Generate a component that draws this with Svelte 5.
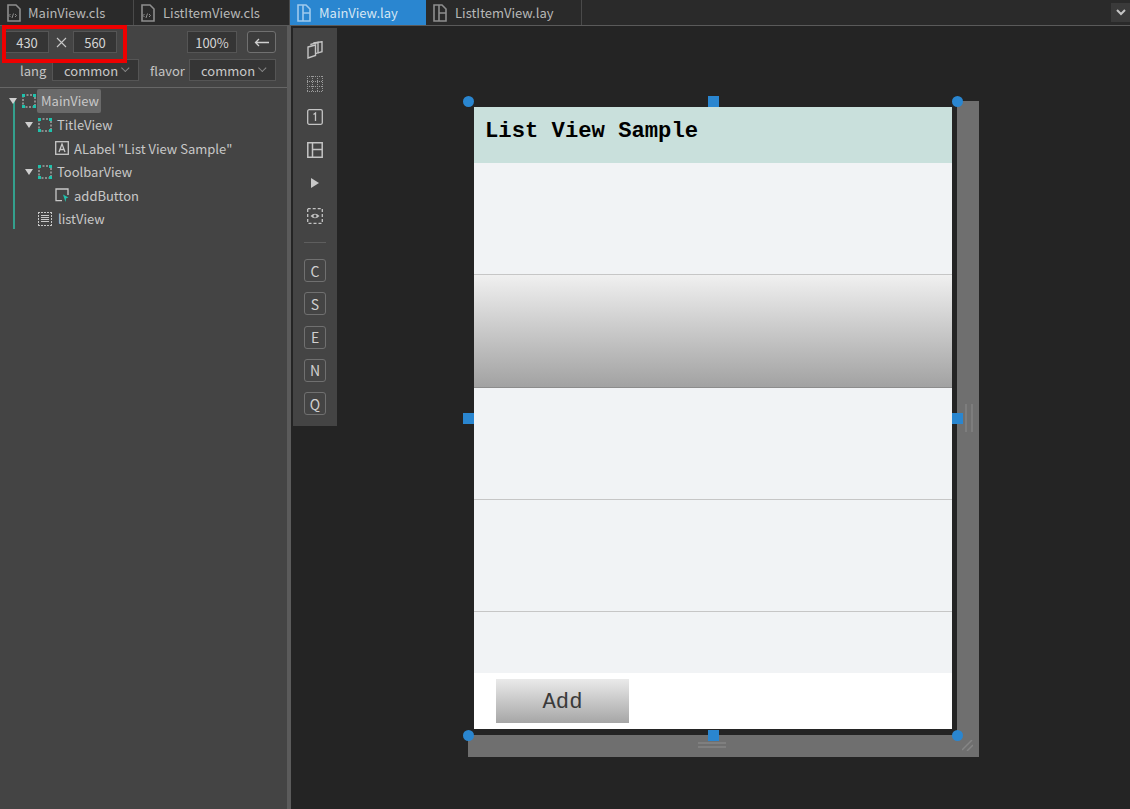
<script>
  const tabs = [
    { name: 'MainView.cls', kind: 'cls', width: 134 },
    { name: 'ListItemView.cls', kind: 'cls', width: 156 },
    { name: 'MainView.lay', kind: 'lay', width: 136, active: true },
    { name: 'ListItemView.lay', kind: 'lay', width: 156 }
  ];

  const tree = [
    { label: 'TitleView', depth: 1, icon: 'view', open: true },
    { label: 'ALabel "List View Sample"', depth: 2, icon: 'label' },
    { label: 'ToolbarView', depth: 1, icon: 'view', open: true },
    { label: 'addButton', depth: 2, icon: 'button' },
    { label: 'listView', depth: 1, icon: 'list' }
  ];

  const letters = ['C', 'S', 'E', 'N', 'Q'];
  const rows = [false, true, false, false, false];
  const handles = ['tl', 'tc', 'tr', 'ml', 'mr', 'bl', 'bc', 'br'];
</script>

<div class="app">
  <header class="tabbar">
    {#each tabs as tab}
      <div class="tab" class:active={tab.active} style="width: {tab.width}px">
        <svg class="file-icon" width="16" height="18" viewBox="0 0 16 18" fill="none" stroke="currentColor" stroke-width="1.6">
          {#if tab.kind === 'cls'}
            <path d="M2 1h8l4 4v12H2z" />
            <path d="M4.500 13l-1.500-1.500 1.500-1.500M7.500 9.500l-1.500 4.500M9 10l1.500 1.500-1.500 1.500" stroke-width="1" />
          {:else}
            <path d="M2 1h8l4 4v12H2z" />
            <path d="M7 1v16M7 9h7" />
          {/if}
        </svg>
        <span>{tab.name}</span>
      </div>
    {/each}
    <div class="tab-menu">
      <svg width="10" height="7" viewBox="0 0 10 7" fill="none" stroke="#c4c4c4" stroke-width="2">
        <path d="M1 1l4 4 4-4" />
      </svg>
    </div>
  </header>

  <div class="body">
    <aside class="side">
      <div class="controls">
        <div class="size-row">
          <div class="size-group">
            <div class="field num">430</div>
            <svg class="times" width="11" height="11" viewBox="0 0 11 11" stroke="#c8c8c8" stroke-width="1.100">
              <path d="M1 1l9 9M10 1l-9 9" />
            </svg>
            <div class="field num">560</div>
          </div>
          <div class="field zoom">100%</div>
          <div class="back">
            <svg width="15" height="9" viewBox="0 0 15 9" fill="none" stroke="#d0d0d0" stroke-width="1.300">
              <path d="M15 4.500H1.500M5 1L1.500 4.500 5 8" />
            </svg>
          </div>
        </div>
        <div class="select-row">
          <span class="select-label lang">lang</span>
          <div class="select">common <i class="caret"></i></div>
          <span class="select-label flavor">flavor</span>
          <div class="select">common <i class="caret"></i></div>
        </div>
      </div>

      <div class="tree">
        <span class="guide"></span>
        <div class="node">
          <i class="arrow"></i>
          <svg class="node-icon" width="14" height="14" viewBox="0 0 14 14">
            <rect x="1" y="1" width="12" height="12" fill="none" stroke="#d0d0d0" stroke-dasharray="2 1.500" />
            <path d="M0 0h3v3H0zM11 0h3v3h-3zM0 11h3v3H0zM11 11h3v3h-3z" fill="#1fc2ac" />
          </svg>
          <span class="node-label root">MainView</span>
        </div>
        {#each tree as node}
          <div class="node" class:d1={node.depth === 1} class:d2={node.depth === 2}>
            {#if node.open}<i class="arrow"></i>{/if}
            {#if node.icon === 'view'}
              <svg class="node-icon" width="14" height="14" viewBox="0 0 14 14">
                <rect x="1" y="1" width="12" height="12" fill="none" stroke="#d0d0d0" stroke-dasharray="2 1.500" />
                <path d="M0 0h3v3H0zM11 0h3v3h-3zM0 11h3v3H0zM11 11h3v3h-3z" fill="#1fc2ac" />
              </svg>
            {:else if node.icon === 'label'}
              <svg class="node-icon" width="14" height="14" viewBox="0 0 14 14" fill="none" stroke="#c8c8c8">
                <rect x=".7" y=".7" width="12.600" height="12.600" stroke-width="1.300" />
                <path d="M4 11l3-8 3 8M5 8.500h4" stroke-width="1.300" />
              </svg>
            {:else if node.icon === 'button'}
              <svg class="node-icon" width="14" height="14" viewBox="0 0 14 14" fill="none">
                <path d="M7 12.700H1V1h12v6" stroke="#c8c8c8" stroke-width="1.300" />
                <path d="M8 6.500l5.500 3-2.300.8L10.500 14z" fill="#1fc2ac" />
              </svg>
            {:else}
              <svg class="node-icon wide" width="14" height="14" viewBox="0 0 14 14" fill="none" stroke="#c8c8c8">
                <path d="M0 .5h14M0 13.500h14M.5 0v14M13.500 0v14" stroke-dasharray="2 1" />
                <path d="M3 3.500h8M3 5.500h8M3 7.500h8M3 9.500h8" />
              </svg>
            {/if}
            <span class="node-label">{node.label}</span>
          </div>
        {/each}
      </div>
    </aside>

    <main class="canvas">
      <div class="tools">
        <svg class="tool" width="16" height="18" viewBox="0 0 16 18" fill="none" stroke="#c4c4c4" stroke-width="1.400">
          <path d="M1 6l7.500-2v10.500L1 17z" />
          <path d="M4 4.300V3.200L11 1.500v10.300l-2.500.8" />
          <path d="M7 2.400V1.800L15 .7v10l-4 1.100" />
        </svg>
        <svg class="tool" width="16" height="16" viewBox="0 0 16 16" fill="none" stroke="#9a9a9a" stroke-dasharray="1 1">
          <path d="M0 .5h16M0 5.500h16M0 10.500h16M0 15.500h16M.5 0v16M5.500 0v16M10.500 0v16M15.500 0v16" />
        </svg>
        <svg class="tool" width="16" height="16" viewBox="0 0 16 16" fill="none" stroke="#c4c4c4" stroke-width="1.300">
          <rect x=".7" y=".7" width="14.600" height="14.600" rx="1.500" />
          <path d="M6.500 5.500L8.500 4v8" />
        </svg>
        <svg class="tool" width="16" height="16" viewBox="0 0 16 16" fill="none" stroke="#c4c4c4" stroke-width="1.500">
          <path d="M.8 .8h14.400v14.400H.8zM5.500 .8v14.400M5.500 7.500h9.700" />
        </svg>
        <svg class="tool" width="16" height="16" viewBox="0 0 16 16" fill="#c8c8c8">
          <path d="M4 3l8 5-8 5z" />
        </svg>
        <svg class="tool" width="16" height="16" viewBox="0 0 16 16" fill="none" stroke="#c4c4c4" stroke-width="1.300">
          <rect x=".7" y=".7" width="14.600" height="14.600" stroke-dasharray="3 2" />
          <path d="M3.500 8Q8 3.500 12.500 8Q8 12.500 3.500 8z" fill="#c4c4c4" stroke="none" />
          <circle cx="8" cy="8" r="1.500" fill="#444" stroke="none" />
        </svg>
        <div class="tool-sep"></div>
        {#each letters as letter}
          <div class="letter">{letter}</div>
        {/each}
      </div>

      <div class="device">
        <div class="window">
          <div class="screen">
            <div class="title">List View Sample</div>
            <div class="list">
              {#each rows as pressed}
                <div class="row" class:pressed></div>
              {/each}
            </div>
            <div class="toolbar">
              <div class="add">Add</div>
            </div>
          </div>
        </div>
        <div class="grip-right"></div>
        <div class="grip-bottom"></div>
        <svg class="grip-corner" width="11" height="11" viewBox="0 0 11 11" stroke="#858585" stroke-width="1.500">
          <path d="M0 10L10 0M5 11l6-6" />
        </svg>
        {#each handles as handle}
          <span class="handle {handle}"></span>
        {/each}
      </div>

      <div class="highlight"></div>
    </main>
  </div>
</div>

<style>
  :global(body) {
    margin: 0;
    background: #242424;
  }

  .app {
    width: 1130px;
    height: 809px;
    display: flex;
    flex-direction: column;
    overflow: hidden;
    font-family: "Noto Sans CJK JP", "Noto Sans", sans-serif;
    font-size: 13px;
    color: #c8c8c8;
    background: #242424;
  }

  .tabbar {
    height: 25px;
    flex: none;
    display: flex;
    background: #2a2a2a;
    border-bottom: 1px solid #5a5a5a;
  }

  .tab {
    height: 25px;
    box-sizing: border-box;
    display: flex;
    align-items: center;
    gap: 7px;
    padding-left: 6px;
    border-right: 1px solid #4a4a4a;
    color: #b8b8b8;
  }

  .tab:first-child {
    gap: 6px;
  }

  .tab.active {
    background: #2a86d0;
    color: #d6e6f4;
    border-right: none;
  }

  .file-icon {
    color: #8e8e8e;
    flex: none;
  }

  .tab.active .file-icon {
    color: #9fcaed;
  }

  .tab-menu {
    margin-left: auto;
    width: 19px;
    height: 19px;
    margin-top: 3px;
    display: flex;
    align-items: center;
    justify-content: center;
    background: #3a3a3a;
  }

  .body {
    flex: 1;
    display: flex;
    min-height: 0;
  }

  .side {
    width: 287px;
    flex: none;
    background: #444444;
    border-right: 4px solid #5b5b5b;
    box-shadow: 1px 0 0 #1d1d1d;
  }

  .controls {
    height: 62px;
    box-sizing: border-box;
    border-bottom: 1px solid #666;
    padding: 5px 0 0 5px;
  }

  .size-row {
    display: flex;
    align-items: center;
    height: 22px;
  }

  .size-group {
    display: flex;
    align-items: center;
    gap: 6.500px;
  }

  .field {
    height: 22px;
    box-sizing: border-box;
    display: flex;
    align-items: center;
    justify-content: center;
    background: #353535;
    border: 1px solid #555;
    color: #d4d4d4;
  }

  .num {
    width: 44px;
  }

  .zoom {
    width: 50px;
    margin-left: 70px;
  }

  .back {
    width: 29px;
    height: 22px;
    margin-left: 10px;
    box-sizing: border-box;
    display: flex;
    align-items: center;
    justify-content: center;
    border: 1px solid #707070;
    border-radius: 3px;
    background: #3c3c3c;
  }

  .select-row {
    display: flex;
    align-items: center;
    margin-top: 6px;
    height: 22px;
  }

  .select-label {
    color: #c4c4c4;
  }

  .lang {
    margin-left: 15px;
    width: 32px;
  }

  .flavor {
    margin-left: 11px;
    width: 39px;
  }

  .select {
    width: 87px;
    height: 22px;
    box-sizing: border-box;
    display: flex;
    align-items: center;
    justify-content: space-between;
    padding: 0 9px 0 11px;
    background: #353535;
    border: 1px solid #555;
    color: #c8c8c8;
  }

  .caret {
    width: 5px;
    height: 5px;
    border-right: 1px solid #888;
    border-bottom: 1px solid #888;
    transform: rotate(45deg) translate(-2px, -1px);
  }

  .tree {
    position: relative;
    padding-top: 1.500px;
  }

  .guide {
    position: absolute;
    left: 13px;
    top: 12px;
    width: 2px;
    height: 129px;
    background: #34a08d;
  }

  .node {
    height: 23.500px;
    display: flex;
    align-items: center;
    position: relative;
    padding-left: 22px;
    color: #c8c8c8;
  }

  .node.d1 {
    padding-left: 38px;
  }

  .node.d2 {
    padding-left: 55px;
  }

  .node-icon {
    flex: none;
    margin-right: 5px;
  }

  .node-icon.wide {
    margin-right: 6px;
  }

  .arrow {
    position: absolute;
    margin-left: -13px;
    width: 0;
    height: 0;
    border-left: 4.500px solid transparent;
    border-right: 4.500px solid transparent;
    border-top: 6px solid #cfcfcf;
  }

  .node-label.root {
    margin-left: -4px;
    padding: 0 2px 0 4px;
    height: 24px;
    line-height: 24px;
    border-radius: 2px;
    background: #6a6a6a;
  }

  .canvas {
    flex: 1;
    position: relative;
    background: #242424;
  }

  .tools {
    position: absolute;
    left: 2px;
    top: 2px;
    width: 44px;
    height: 398px;
    box-sizing: border-box;
    background: #444444;
    display: flex;
    flex-direction: column;
    align-items: center;
    padding-top: 13px;
  }

  .tool {
    margin-bottom: 17px;
    flex: none;
  }

  .tool-sep {
    width: 22px;
    height: 1px;
    flex: none;
    background: #5e5e5e;
    margin: 1px 0 16px;
  }

  .letter {
    width: 22px;
    height: 23px;
    flex: none;
    box-sizing: border-box;
    border: 1px solid #707070;
    border-radius: 3px;
    margin-bottom: 10.300px;
    display: flex;
    align-items: center;
    justify-content: center;
    color: #d0d0d0;
    font-size: 14px;
  }

  .device {
    position: absolute;
    left: 177px;
    top: 75px;
    width: 511px;
    height: 656px;
    background: #6f6f6f;
  }

  .window {
    width: 489px;
    height: 634px;
    background: #242424;
    box-sizing: border-box;
    padding: 6px 0 0 6px;
  }

  .screen {
    width: 478px;
    height: 622px;
    display: flex;
    flex-direction: column;
    background: #fff;
  }

  .title {
    height: 56px;
    flex: none;
    box-sizing: border-box;
    padding: 10px 0 0 11px;
    background: #c9e0dc;
    font-family: "Liberation Mono", monospace;
    font-weight: bold;
    font-size: 22.200px;
    line-height: 30px;
    color: #000;
  }

  .list {
    height: 510px;
    flex: none;
    overflow: hidden;
    background: #f1f3f5;
  }

  .row {
    height: 112.250px;
    box-sizing: border-box;
    border-bottom: 1px solid #c6c6c6;
  }

  .row.pressed {
    background: linear-gradient(#f0f0f0, #a2a2a2);
    border-bottom-color: #8c8c8c;
  }

  .toolbar {
    flex: 1;
    padding: 6px 0 0 22px;
  }

  .add {
    width: 133px;
    height: 44px;
    padding-top: 2px;
    box-sizing: border-box;
    display: flex;
    align-items: center;
    justify-content: center;
    background: linear-gradient(#eaeaea, #a6a6a6);
    font-family: "Liberation Mono", monospace;
    font-size: 22.200px;
    color: #3a3a3a;
  }

  .grip-right {
    position: absolute;
    left: 497px;
    top: 303px;
    width: 2px;
    height: 28px;
    background: #7d7d7d;
    box-shadow: 6px 0 0 #7d7d7d;
  }

  .grip-bottom {
    position: absolute;
    left: 230px;
    top: 641px;
    width: 28px;
    height: 2px;
    background: #7f7f7f;
    box-shadow: 0 4px 0 #7f7f7f;
  }

  .grip-corner {
    position: absolute;
    right: 6px;
    bottom: 6px;
  }

  .handle {
    position: absolute;
    width: 11px;
    height: 11px;
    margin: -5.500px 0 0 -5.500px;
    background: #2a86d0;
  }

  .tl, .tr, .bl, .br {
    border-radius: 50%;
  }

  .tl { left: 0; top: 0; }
  .tc { left: 245px; top: 0; }
  .tr { left: 489px; top: 0; }
  .ml { left: 0; top: 317px; }
  .mr { left: 489px; top: 317px; }
  .bl { left: 0; top: 634px; }
  .bc { left: 245px; top: 634px; }
  .br { left: 489px; top: 634px; }

  /* red annotation drawn over the screenshot */
  .highlight {
    position: fixed;
    left: 2px;
    top: 25px;
    width: 117px;
    height: 30px;
    border: 4px solid #ee0000;
  }
</style>
